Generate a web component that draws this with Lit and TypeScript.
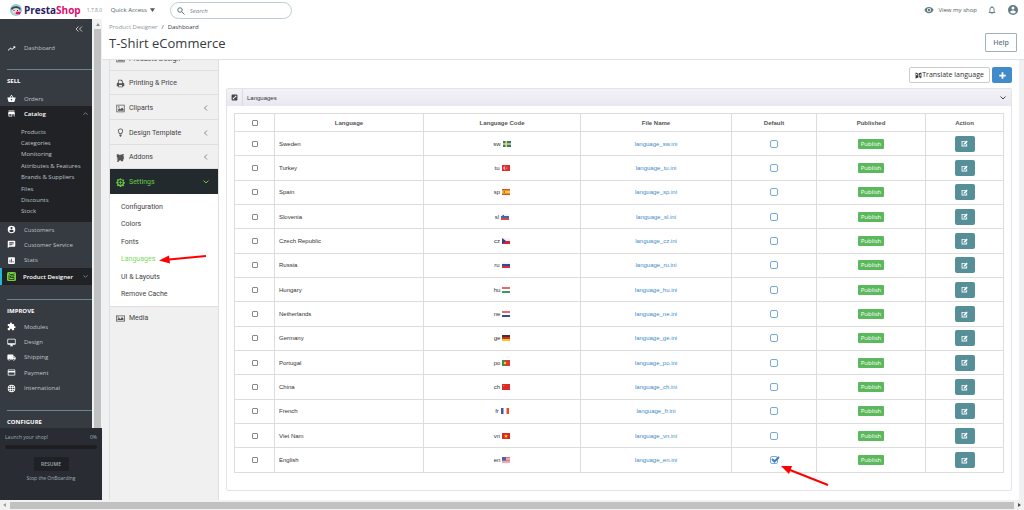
import { LitElement, html, css, svg, nothing } from "lit";
import { customElement } from "lit/decorators.js";
import { classMap } from "lit/directives/class-map.js";

interface Language {
  name: string;
  code: string;
  isDefault?: boolean;
}

const LANGUAGES: Language[] = [
  { name: "Sweden", code: "sw" },
  { name: "Turkey", code: "tu" },
  { name: "Spain", code: "sp" },
  { name: "Slovenia", code: "sl" },
  { name: "Czech Republic", code: "cz" },
  { name: "Russia", code: "ru" },
  { name: "Hungary", code: "hu" },
  { name: "Netherlands", code: "ne" },
  { name: "Germany", code: "ge" },
  { name: "Portugal", code: "po" },
  { name: "China", code: "ch" },
  { name: "French", code: "fr" },
  { name: "Viet Nam", code: "vn" },
  { name: "English", code: "en", isDefault: true },
];

const bands = (a: string, b: string, c: string) => svg`
  <rect width="16" height="4" fill=${a}/><rect y="4" width="16" height="4" fill=${b}/><rect y="8" width="16" height="4" fill=${c}/>`;

const FLAGS: Record<string, unknown> = {
  sw: svg`<rect width="16" height="12" fill="#2f74b0"/><path d="M5 0h3v12H5zM0 4.5h16v3H0z" fill="#f0de2c"/>`,
  tu: svg`<rect width="16" height="12" fill="#e02d2d"/><path d="M7.5 3.5a3 3 0 1 0 0 5 2.4 2.4 0 1 1 0-5z" fill="#fff"/><circle cx="9.5" cy="6" r="1" fill="#fff"/>`,
  sp: svg`${bands("#e0493a", "#fbd52e", "#e0493a")}<rect y="3" width="16" height="6" fill="#fbd52e"/><rect x="3" y="4" width="3" height="4" fill="#c86b3a"/>`,
  sl: svg`${bands("#f4f4f4", "#3e68ae", "#dc4848")}<rect x="3" y="2" width="3" height="4" fill="#3e68ae"/>`,
  cz: svg`<rect width="16" height="6" fill="#f4f4f4"/><rect y="6" width="16" height="6" fill="#dc1f2c"/><path d="M0 0l8 6-8 6z" fill="#24478f"/>`,
  ru: bands("#f4f4f4", "#2c4a9f", "#d72c3a"),
  hu: bands("#e8686a", "#ffffff", "#3f9a5c"),
  ne: bands("#e8686a", "#ffffff", "#2b4fa0"),
  ge: bands("#3a3634", "#dc2a22", "#f4c620"),
  po: svg`<rect width="16" height="12" fill="#dd3b34"/><rect width="6" height="12" fill="#3a9447"/><circle cx="6" cy="6" r="2.4" fill="#f1cf3a"/>`,
  ch: svg`<rect width="16" height="12" fill="#dc2b26"/><circle cx="3.5" cy="3.5" r="1.4" fill="#ee8c3a"/>`,
  fr: svg`<rect width="16" height="12" fill="#fff"/><rect width="5" height="12" fill="#4b51ad"/><rect x="11" width="5" height="12" fill="#e94b2b"/>`,
  vn: svg`<rect width="16" height="12" fill="#d92a20"/><path d="M8 2l1.2 3h3l-2.4 1.8.9 3L8 8l-2.700 1.800.900-3L3.800 5h3z" fill="#f9dc2e"/>`,
  en: svg`<rect width="16" height="12" fill="#f6dfe0"/><path d="M0 1h16M0 4h16M0 7h16M0 10h16" stroke="#dd5560" stroke-width="1.500"/><rect width="8" height="7" fill="#4f5fa8"/>`,
};

const flag = (code: string) => html`<svg class="flag" viewBox="0 0 16 12" preserveAspectRatio="none" aria-hidden="true">${FLAGS[code]}</svg>`;

// Filled 24-unit glyphs
const GLYPHS: Record<string, string> = {
  trend: "M16 6l2.290 2.290-4.880 4.880-4-4L2 16.590 3.410 18l6-6 4 4 6.300-6.290L22 12V6z",
  basket: "M17.210 9l-4.380-6.560a1 1 0 0 0-1.660 0L6.790 9H2c-.550 0-1 .450-1 1l.040.270 2.540 9.270A2 2 0 0 0 5.500 21h13a2 2 0 0 0 1.930-1.460l2.540-9.270L23 10c0-.550-.450-1-1-1zM9 9l3-4.400L15 9zm3 8a2 2 0 1 1 0-4 2 2 0 0 1 0 4z",
  store: "M20 4H4v2h16V4zm1 10v-2l-1-5H4l-1 5v2h1v6h10v-6h4v6h2v-6h1zm-9 4H6v-4h6v4z",
  account: "M12 2a10 10 0 1 0 0 20 10 10 0 0 0 0-20zm0 3a3 3 0 1 1 0 6 3 3 0 0 1 0-6zm0 14.200a7.200 7.200 0 0 1-6-3.220c.030-1.990 4-3.080 6-3.080s5.970 1.090 6 3.080a7.200 7.200 0 0 1-6 3.220z",
  chat: "M20 2H4a2 2 0 0 0-2 2v18l4-4h14a2 2 0 0 0 2-2V4a2 2 0 0 0-2-2zM6 9h12v2H6zm8 5H6v-2h8zm4-6H6V6h12z",
  stats: "M19 3H5a2 2 0 0 0-2 2v14a2 2 0 0 0 2 2h14a2 2 0 0 0 2-2V5a2 2 0 0 0-2-2zM9 17H7v-7h2zm4 0h-2V7h2zm4 0h-2v-4h2z",
  puzzle: "M20.500 11H19V7a2 2 0 0 0-2-2h-4V3.500a2.500 2.500 0 0 0-5 0V5H4a2 2 0 0 0-2 2v3.800h1.500a2.700 2.700 0 0 1 0 5.400H2V20a2 2 0 0 0 2 2h3.800v-1.500a2.700 2.700 0 0 1 5.400 0V22H17a2 2 0 0 0 2-2v-4h1.500a2.500 2.500 0 0 0 0-5z",
  monitor: "M21 2H3a2 2 0 0 0-2 2v12a2 2 0 0 0 2 2h7v2H8v2h8v-2h-2v-2h7a2 2 0 0 0 2-2V4a2 2 0 0 0-2-2zm0 12H3V4h18z",
  truck: "M20 8h-3V4H3a2 2 0 0 0-2 2v11h2a3 3 0 0 0 6 0h6a3 3 0 0 0 6 0h2v-5zM6 18.500a1.500 1.500 0 1 1 0-3 1.500 1.500 0 0 1 0 3zm13.500-9l1.960 2.500H17V9.500zM18 18.500a1.500 1.500 0 1 1 0-3 1.500 1.500 0 0 1 0 3z",
  card: "M20 4H4a2 2 0 0 0-2 2v12a2 2 0 0 0 2 2h16a2 2 0 0 0 2-2V6a2 2 0 0 0-2-2zm0 14H4v-6h16zm0-10H4V6h16z",
  globe: "M12 2a10 10 0 1 0 0 20 10 10 0 0 0 0-20zm7 6h-3c-.300-1.300-.800-2.400-1.400-3.500A8 8 0 0 1 19 8zm-7-4c.800 1.200 1.500 2.500 1.900 4h-3.800c.400-1.500 1.100-2.800 1.900-4zM4.300 14a8 8 0 0 1 0-4h3.300a16 16 0 0 0 0 4zm.800 2h3c.300 1.300.700 2.400 1.300 3.500A8 8 0 0 1 5.100 16zm3-8h-3a8 8 0 0 1 4.300-3.500A15 15 0 0 0 8.100 8zM12 20c-.800-1.200-1.500-2.500-1.900-4h3.800c-.400 1.500-1.100 2.800-1.900 4zm2.300-6H9.700a14 14 0 0 1 0-4h4.600a14 14 0 0 1 0 4zm.300 5.500c.600-1.100 1-2.200 1.300-3.500h3a8 8 0 0 1-4.300 3.500zm1.800-5.500a16 16 0 0 0 0-4h3.300a8 8 0 0 1 0 4z",
  eye: "M12 4.500C7 4.500 2.700 7.600 1 12c1.700 4.400 6 7.500 11 7.500s9.300-3.100 11-7.500c-1.700-4.400-6-7.500-11-7.500zM12 17a5 5 0 1 1 0-10 5 5 0 0 1 0 10zm0-8a3 3 0 1 0 0 6 3 3 0 0 0 0-6z",
  bell: "M12 22a2 2 0 0 0 2-2h-4a2 2 0 0 0 2 2zm6-6v-5c0-3.070-1.630-5.640-4.500-6.320V4a1.500 1.500 0 0 0-3 0v.680C7.640 5.360 6 7.920 6 11v5l-2 2v1h16v-1zm-2 1H8v-6c0-2.480 1.510-4.500 4-4.500s4 2.020 4 4.500z",
  printer: "M6 2h9l3 3v5h1a3 3 0 0 1 3 3v6h-4v3H6v-3H2v-6a3 3 0 0 1 3-3h1zm2 2v7h8V6h-3V4zm0 12v4h8v-4z",
  picture: "M1 2h22v20H1zm2 2v16h18V4zm2 14v-3l4-4 3 3 4-5 4 5v4zM7.500 6a2 2 0 1 1 0 4 2 2 0 0 1 0-4z",
  bulb: "M12 1a7 7 0 0 0-7 7c0 3 2.500 4.500 3.500 8h7c1-3.500 3.500-5 3.500-8a7 7 0 0 0-7-7zm0 2a5 5 0 0 1 5 5c0 2-2 3.500-3 6h-4c-1-2.500-3-4-3-6a5 5 0 0 1 5-5zM9 17h6v3l-2 3h-2l-2-3z",
  addon: "M2 3h5l2 3 2-3 2 3 2-3h7l-3 5 3 2-2 3 2 3-3 1v5h-5l-2-3-3 1-2 3H2l3-5-3-2 3-3-3-2z",
  cog: "M10 1h4l.5 3 2 .8 2.500-1.800 3 3-1.800 2.500.8 2 2.500.5v3.500l-2.500.500-.8 2 1.800 2.500-3 3-2.500-1.800-2 .8-.5 2.500h-4l-.5-2.500-2-.8L5 22l-3-3 1.800-2.500-.8-2-2.500-.5v-3.500l2.500-.5.8-2L2 5.500l3-3 2.500 1.800 2-.8zM12 5.500a6.500 6.500 0 1 0 0 13 6.500 6.500 0 0 0 0-13zM11 7h2v4h4v2h-4v4h-2v-4H7v-2h4z",
  media: "M0 4h24v16H0zm2 2v12h20V6zm2 10v-3l4-3 4 3 4-5 4 4v4zM4 7h4v2H4z",
  expand: "M5 2h14a3 3 0 0 1 3 3v14a3 3 0 0 1-3 3H5a3 3 0 0 1-3-3V5a3 3 0 0 1 3-3zm7 4l2 2-6 6-2-2v6h6l-2-2 6-6 2 2V6z",
  edit: "M3 3h12v3H5v13h13v-5l3-2v10H2V3zm16-1l4 4-9 9-5 1 1-5z",
  translate: "M2 2l9 3v14l-9 3zm2 5v4l4 1V6zm9-3l9-2v17l-3 3-1-3-5-1zm4 3l-2 8h2l1-3 1 3h1l-1-8z",
  plus: "M9 1h6v8h8v6h-8v8H9v-8H1V9h8z",
};

const glyph = (name: string, cls = "icon") =>
  html`<svg class=${cls} viewBox="0 0 24 24" aria-hidden="true"><path fill="currentColor" fill-rule="evenodd" d=${GLYPHS[name]}></path></svg>`;

const chevron = (d: string, cls = "chev") =>
  html`<svg class=${cls} viewBox="0 0 12 12" aria-hidden="true"><path fill="none" stroke="currentColor" stroke-width="2" d=${d}></path></svg>`;

const UP = "M1 9l5-5 5 5";
const DOWN = "M1 3l5 5 5-5";
const LEFT = "M8 1L3 6l5 5";

@customElement("shop-header")
class ShopHeader extends LitElement {
  static styles = css`
    :host { display: flex; align-items: center; height: 19px; background: #fff; color: #4e5a5f; font: 6px/10px "Open Sans", sans-serif; }
    .logo { display: flex; align-items: center; gap: 2px; margin-left: 10px; font-weight: 700; font-size: 10px; color: #2b1c60; text-decoration: none; }
    .mark { width: 12px; height: 12px; }
    .pink { color: #df0a6e; }
    .version { width: 19px; margin-left: 6px; font-size: 5px; color: #8a9598; }
    .quick { display: flex; align-items: center; gap: 3px; margin-left: 5px; padding: 0; border: 0; background: none; font: inherit; color: inherit; }
    .caret { width: 5px; height: 4px; }
    .search { box-sizing: border-box; display: flex; align-items: center; gap: 5px; width: 122px; height: 17px; margin: 2px 0 0 15px; padding: 0 6px; border: 1px solid #bccdd2; border-radius: 9px; }
    .search svg { flex: none; width: 8px; height: 8px; color: #5c7780; }
    .box { min-width: 0; flex: 1; border: 0; outline: 0; padding: 0; background: none; font: italic 6px/10px "Open Sans", sans-serif; color: #4e5a5f; }
    .box::placeholder { color: #6c868e; opacity: 1; }
    .right { display: flex; align-items: center; margin-left: auto; padding-right: 5px; }
    .view { display: flex; align-items: center; gap: 4px; color: inherit; text-decoration: none; }
    .icon { display: block; width: 10px; height: 10px; color: #5f7b84; }
    .plain { margin: 0 0 0 10px; padding: 0; border: 0; background: none; }
    .user { width: 12px; height: 12px; }
  `;
  render() {
    return html`
      <a class="logo" href="#">
        <svg class="mark" viewBox="0 0 24 24" aria-hidden="true">
          <circle cx="12" cy="12" r="12" fill="#8fd0dc"/>
          <path d="M2 10C2 3 22 2 21 11l-1 3H6z" fill="#41454d"/>
          <ellipse cx="12" cy="15" rx="8" ry="7" fill="#d9cec6"/>
          <circle cx="8" cy="13" r="3" fill="#fff"/><circle cx="15" cy="13" r="3" fill="#fff"/>
          <circle cx="8" cy="13" r="1.300" fill="#222"/><circle cx="15" cy="13" r="1.300" fill="#222"/>
          <path d="M13 15l9 1-3 5-8-1z" fill="#df0a6e"/>
        </svg>
        <span>Presta<span class="pink">Shop</span></span>
      </a>
      <span class="version">1.7.8.0</span>
      <button class="quick">Quick Access <svg class="caret" viewBox="0 0 8 6" aria-hidden="true"><path d="M0 0h8L4 6z" fill="currentColor"/></svg></button>
      <label class="search">
        <svg viewBox="0 0 16 16" aria-hidden="true"><g fill="none" stroke="currentColor" stroke-width="2"><circle cx="6" cy="6" r="4.500"/><path d="M9.500 9.500l5.500 5.500"/></g></svg>
        <input class="box" type="search" placeholder="Search" aria-label="Search" />
      </label>
      <div class="right">
        <a class="view" href="#">${glyph("eye")}View my shop</a>
        <button class="plain" aria-label="Notifications">${glyph("bell")}</button>
        <button class="plain" aria-label="Account">${glyph("account", "icon user")}</button>
      </div>`;
  }
}

@customElement("shop-sidebar")
class ShopSidebar extends LitElement {
  static styles = css`
    :host { display: flex; flex-direction: column; width: 102px; min-height: 0; color: #bec3c7; font: 6px/8px "Open Sans", sans-serif; }
    .scroll { display: flex; flex: 1; min-height: 0; overflow: hidden; }
    nav { display: flex; flex-direction: column; width: 92px; background: #363a41; }
    .bar { display: flex; flex-direction: column; align-items: center; flex: 1; margin-left: 1px; background: #f1f1f1; }
    .arrow { width: 4px; height: 3px; margin: 4px 0 3px; }
    .thumb { flex: 1; width: 7px; background: #c1c1c1; }
    ul { display: grid; grid-auto-rows: 1fr; margin: 0; padding: 0; list-style: none; }
    li { display: grid; }
    a { display: flex; align-items: center; gap: 8px; padding-left: 7px; color: inherit; text-decoration: none; }
    .fold { align-self: flex-end; margin: 7px 9px 0 0; padding: 0; border: 0; background: none; color: #bec3c7; height: 6px; }
    .fold svg { display: block; width: 8px; height: 6px; }
    .icon { width: 9px; height: 9px; color: #fff; flex: none; }
    .dash { height: 14px; margin-top: 9px; }
    h2 { margin: 0 0 0 7px; padding-top: 6px; border-top: 1px solid #6c868e; font: 700 6px/10px "Open Sans", sans-serif; color: #fff; }
    .sell { margin-top: 14px; }
    .orders { height: 15px; margin-top: 5px; }
    .catalog { box-sizing: border-box; height: 116px; background: #202226; }
    .on { height: 15px; font-weight: 600; color: #fff; }
    .sub { height: 91px; margin-top: 5px; }
    .sub a { padding-left: 21px; }
    .trio { height: 46px; }
    .designer { box-sizing: border-box; height: 17px; border-left: 2px solid #25b9d7; background: #202226; padding-left: 5px; gap: 7px; font-weight: 600; color: #fff; white-space: nowrap; }
    .green { color: #6fd03c; }
    .improve { margin-top: 14px; }
    .five { height: 77px; margin-top: 3px; }
    .configure { margin-top: 14px; }
    .chev { width: 5px; height: 5px; margin: 0 4px 0 auto; color: #7e9399; }
    .onboard { display: flex; flex-direction: column; height: 72px; padding: 0 5px; background: #292c33; color: #9db0b5; font-size: 5px; }
    .launch { display: flex; justify-content: space-between; margin-top: 5px; }
    .progress { height: 4px; margin-top: 4px; border-radius: 2px; background: #1c1e22; }
    .resume { align-self: center; width: 35px; height: 14px; margin-top: 8px; padding: 0; border: 0; border-radius: 1px; background: #1f2125; color: #9db0b5; font: 600 5px/8px "Open Sans", sans-serif; }
    .stop { align-self: center; margin-top: 3px; padding: 0; gap: 0; }
  `;
  private item(icon: string, label: string) {
    return html`<li><a href="#">${glyph(icon)}${label}</a></li>`;
  }
  render() {
    const sub = ["Products", "Categories", "Monitoring", "Attributes & Features", "Brands & Suppliers", "Files", "Discounts", "Stock"];
    return html`
      <div class="scroll">
        <nav>
          <button class="fold" aria-label="Collapse menu"><svg viewBox="0 0 16 12" aria-hidden="true"><path d="M7 1L2 6l5 5M14 1L9 6l5 5" fill="none" stroke="currentColor" stroke-width="2"/></svg></button>
          <a class="dash" href="#">${glyph("trend")}Dashboard</a>
          <h2 class="sell">SELL</h2>
          <a class="orders" href="#">${glyph("basket")}Orders</a>
          <div class="catalog">
            <a class="on" href="#">${glyph("store")}Catalog${chevron(UP)}</a>
            <ul class="sub">${sub.map((s) => html`<li><a href="#">${s}</a></li>`)}</ul>
          </div>
          <ul class="trio">
            ${this.item("account", "Customers")}${this.item("chat", "Customer Service")}${this.item("stats", "Stats")}
          </ul>
          <a class="designer" href="#">
            <svg class="icon green" viewBox="0 0 18 18" aria-hidden="true"><rect width="18" height="18" rx="3" fill="currentColor"/><path d="M4 3l3 2h5l3-2M4 6v9h10v-4H7V8h7V6" fill="none" stroke="#202226" stroke-width="1.500"/></svg>
            Product Designer${chevron(DOWN)}
          </a>
          <h2 class="improve">IMPROVE</h2>
          <ul class="five">
            ${this.item("puzzle", "Modules")}${this.item("monitor", "Design")}${this.item("truck", "Shipping")}${this.item("card", "Payment")}${this.item("globe", "International")}
          </ul>
          <h2 class="configure">CONFIGURE</h2>
        </nav>
        <div class="bar">
          <svg class="arrow" viewBox="0 0 8 6" aria-hidden="true"><path d="M0 6h8L4 0z" fill="#8a8a8a"/></svg>
          <div class="thumb"></div>
        </div>
      </div>
      <div class="onboard">
        <div class="launch"><span>Launch your shop!</span><span>0%</span></div>
        <div class="progress"></div>
        <button class="resume">RESUME</button>
        <a class="stop" href="#">Stop the OnBoarding</a>
      </div>`;
  }
}

@customElement("designer-menu")
class DesignerMenu extends LitElement {
  static styles = css`
    :host { display: block; box-sizing: border-box; width: 110px; border: solid #e0e0e0; border-width: 0 1px; background: #f0f0f0; color: #444; font: 7px/10px Roboto, sans-serif; overflow: hidden; }
    ul { display: grid; grid-auto-rows: 1fr; margin: 0; padding: 0; list-style: none; }
    li { display: grid; position: relative; }
    a { display: flex; align-items: center; gap: 4px; padding: 0 9px 0 6px; color: inherit; text-decoration: none; }
    .main { height: 148px; margin-top: -14px; }
    .main li { border-bottom: 1px solid #dedede; }
    .main a { padding-top: 2px; }
    .icon { width: 9px; height: 9px; color: #555; flex: none; }
    .chev { width: 6px; height: 6px; margin-left: auto; color: #888; }
    .main .active { background: #222a2d; color: #6ccb45; border-color: #222a2d; }
    .active .icon, .active .chev { color: #6ccb45; }
    .sub { box-sizing: border-box; height: 113px; padding: 4px 0 3px; background: #fff; border-bottom: 1px solid #dedede; }
    .sub a { padding-left: 11px; }
    .current { color: #7ed957; }
    .pointer { position: absolute; left: 48px; top: 1px; width: 50px; height: 12px; }
    .media { height: 22px; }
  `;
  render() {
    const main: [string, string, string?][] = [
      ["picture", "Products Design"],
      ["printer", "Printing & Price"],
      ["picture", "Cliparts", LEFT],
      ["bulb", "Design Template", LEFT],
      ["addon", "Addons", LEFT],
      ["cog", "Settings", DOWN],
    ];
    const sub = ["Configuration", "Colors", "Fonts", "Languages", "UI & Layouts", "Remove Cache"];
    return html`
      <ul class="main">
        ${main.map(([icon, label, arrow]) => html`
          <li class=${classMap({ active: label === "Settings" })}><a href="#">${glyph(icon)}${label}${arrow ? chevron(arrow) : nothing}</a></li>`)}
      </ul>
      <ul class="sub">
        ${sub.map((s) => html`<li class=${classMap({ current: s === "Languages" })}><a href="#">${s}</a>
          ${s === "Languages" ? html`<svg class="pointer" viewBox="0 0 50 12" aria-hidden="true"><path d="M48 4L11 7.500" stroke="#f00" stroke-width="2"/><path d="M1 8.500L11 3.500l1 8z" fill="#f00"/></svg>` : nothing}</li>`)}
      </ul>
      <a class="media" href="#">${glyph("media")}Media</a>`;
  }
}

@customElement("language-panel")
class LanguagePanel extends LitElement {
  static styles = css`
    :host { display: flex; flex-direction: column; flex: 1; min-width: 0; margin-right: 5px; padding: 7px 7px 9px; background: #fff; color: #333; font: 6px/10px "Liberation Sans", sans-serif; }
    .tools { display: flex; justify-content: flex-end; gap: 2px; height: 16px; }
    button { font-family: "Open Sans", sans-serif; }
    .translate { display: flex; align-items: center; padding: 0 5px; border: 1px solid #ccc; border-radius: 2px; background: #fff; color: #333; font-size: 7px; line-height: 10px; white-space: nowrap; }
    .small { width: 7px; height: 7px; }
    .add { display: grid; place-items: center; width: 20px; padding: 0; border: 0; border-radius: 2px; background: #428bca; color: #fff; }
    .panel { display: flex; flex-direction: column; flex: 1; min-height: 0; margin-top: 5px; border: 1px solid #e4e4e8; border-radius: 2px; }
    .head { display: flex; align-items: center; height: 17px; background: linear-gradient(#f3f2f7, #e9e8f2); }
    .grip { display: grid; place-items: center; align-self: stretch; width: 15px; border-right: 1px solid #dcdbe3; color: #444; }
    h2 { margin: 0 0 0 4px; font: inherit; }
    .toggle { margin: 0 5px 0 auto; padding: 0; border: 0; background: none; color: #444; height: 6px; }
    .chev { display: block; width: 6px; height: 6px; }
    .body { display: flex; flex: 1; min-height: 0; padding: 7px 8px 17px 7px; }
    table { flex: 1; width: 100%; height: 100%; border-collapse: collapse; table-layout: fixed; }
    .c1 { width: 40px; } .c2 { width: 149px; } .c3 { width: 157px; } .c4 { width: 151px; } .c5 { width: 85px; } .c6 { width: 109px; } .c7 { width: 78px; }
    th, td { padding: 0; border: 1px solid #ddd; text-align: center; vertical-align: middle; }
    th { height: 17px; color: #555; font-weight: 700; }
    .name { padding-left: 4px; text-align: left; }
    .flag { width: 8px; height: 6px; margin-left: 2px; vertical-align: -1px; }
    .file { color: #428bca; text-decoration: none; }
    input { appearance: none; box-sizing: border-box; display: block; margin: 0 auto; width: 6px; height: 6px; border: 1px solid #888; border-radius: 1px; background: #fff; }
    .def { width: 8px; height: 8px; border-color: #7aa9dc; border-radius: 2px; }
    .choice { position: relative; display: block; width: 8px; margin: 0 auto; }
    .tick { position: absolute; left: 1px; top: 0; width: 9px; height: 7px; pointer-events: none; }
    .pointer { position: absolute; left: 10px; top: 9px; width: 50px; height: 22px; }
    .publish { display: block; height: 10px; margin: 0 auto; padding: 0 3px; border: 0; border-radius: 1px; background: #5cb85c; color: #fff; font-size: 6px; line-height: 10px; }
    .edit { display: grid; place-items: center; width: 20px; height: 16px; margin: 0 auto; padding: 0; border: 0; border-radius: 2px; background: #578f98; color: #fff; }
  `;
  render() {
    return html`
      <div class="tools">
        <button class="translate">${glyph("translate", "small")}Translate language</button>
        <button class="add" aria-label="Add language">${glyph("plus", "small")}</button>
      </div>
      <section class="panel">
        <div class="head">
          <span class="grip">${glyph("expand", "small")}</span>
          <h2>Languages</h2>
          <button class="toggle" aria-label="Collapse">${chevron(DOWN)}</button>
        </div>
        <div class="body">
          <table>
            <colgroup><col class="c1"><col class="c2"><col class="c3"><col class="c4"><col class="c5"><col class="c6"><col class="c7"></colgroup>
            <thead>
              <tr>
                <th><input type="checkbox" aria-label="Select all" /></th>
                <th>Language</th><th>Language Code</th><th>File Name</th><th>Default</th><th>Published</th><th>Action</th>
              </tr>
            </thead>
            <tbody>
              ${LANGUAGES.map((l) => html`
                <tr>
                  <td><input type="checkbox" aria-label=${"Select " + l.name} /></td>
                  <td class="name">${l.name}</td>
                  <td>${l.code}${flag(l.code)}</td>
                  <td><a class="file" href="#">language_${l.code}.ini</a></td>
                  <td>
                    <span class="choice">
                      <input class="def" type="checkbox" aria-label=${"Default " + l.name} ?checked=${!!l.isDefault} />
                      ${l.isDefault ? html`
                        <svg class="tick" viewBox="0 0 18 14" aria-hidden="true"><path d="M2 6l5 5 9-9" fill="none" stroke="#3a7fc4" stroke-width="4"/></svg>
                        <svg class="pointer" viewBox="0 0 50 22" aria-hidden="true"><path d="M48 20L10 5" stroke="#f00" stroke-width="2"/><path d="M1 1h11L9 9z" fill="#f00"/></svg>` : nothing}
                    </span>
                  </td>
                  <td><button class="publish">Publish</button></td>
                  <td><button class="edit" aria-label=${"Edit " + l.name}>${glyph("edit", "small")}</button></td>
                </tr>`)}
            </tbody>
          </table>
        </div>
      </section>`;
  }
}

@customElement("app-root")
class AppRoot extends LitElement {
  static styles = css`
    :host { display: flex; flex-direction: column; height: 100vh; overflow: hidden; background: #eff1f3; font-family: "Open Sans", sans-serif; }
    .page { display: flex; flex: 1; min-height: 0; }
    .main { display: flex; flex-direction: column; flex: 1; min-width: 0; }
    .title { box-sizing: border-box; display: flex; justify-content: space-between; align-items: flex-start; height: 41px; padding: 0 7px; background: #fff; border-bottom: 1px solid #e0e3e5; color: #363a41; }
    .crumbs { display: flex; gap: 4px; margin-top: 3px; font-size: 6px; line-height: 10px; }
    .crumbs a { color: #8a9598; text-decoration: none; }
    h1 { margin: 1px 0 0; font: 400 13px/20px "Open Sans", sans-serif; }
    .help { width: 32px; height: 19px; margin-top: 14px; padding: 0; border: 1px solid #9fb1b6; border-radius: 1px; background: #fff; color: #5f7b84; font: 600 7px/10px "Open Sans", sans-serif; }
    .content { display: flex; flex: 1; min-height: 0; padding-left: 7px; }
    .hbar { display: flex; align-items: center; gap: 4px; height: 10px; padding: 0 3px; background: #f1f1f1; }
    .hthumb { flex: 1; height: 7px; background: #c1c1c1; }
    .arrow { width: 3px; height: 4px; }
  `;
  render() {
    return html`
      <shop-header></shop-header>
      <div class="page">
        <shop-sidebar></shop-sidebar>
        <main class="main">
          <header class="title">
            <div>
              <div class="crumbs"><a href="#">Product Designer</a><span>/</span><span>Dashboard</span></div>
              <h1>T-Shirt eCommerce</h1>
            </div>
            <button class="help">Help</button>
          </header>
          <div class="content">
            <designer-menu></designer-menu>
            <language-panel></language-panel>
          </div>
        </main>
      </div>
      <div class="hbar">
        <svg class="arrow" viewBox="0 0 6 8" aria-hidden="true"><path d="M6 0v8L0 4z" fill="#a0a0a0"/></svg>
        <div class="hthumb"></div>
        <svg class="arrow" viewBox="0 0 6 8" aria-hidden="true"><path d="M0 0v8l6-4z" fill="#505050"/></svg>
      </div>`;
  }
}
